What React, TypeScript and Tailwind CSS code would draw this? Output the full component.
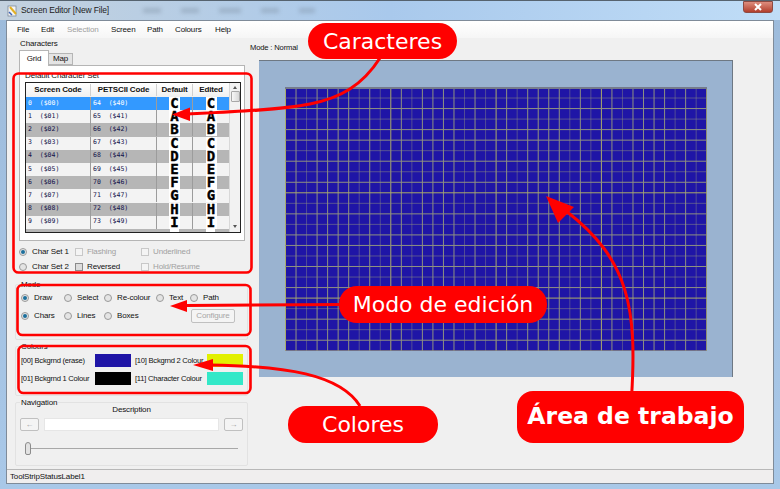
import React from 'react';

const menus = [
  { label: 'File', w: 'w-[24px]', off: false },
  { label: 'Edit', w: 'w-[26px]', off: false },
  { label: 'Selection', w: 'w-[44px]', off: true },
  { label: 'Screen', w: 'w-[36px]', off: false },
  { label: 'Path', w: 'w-[28px]', off: false },
  { label: 'Colours', w: 'w-[40px]', off: false },
  { label: 'Help', w: 'w-[24px]', off: false },
];

const rows = [
  ['0  ($00)', '64  ($40)', 'C'],
  ['1  ($01)', '65  ($41)', 'A'],
  ['2  ($02)', '66  ($42)', 'B'],
  ['3  ($03)', '67  ($43)', 'C'],
  ['4  ($04)', '68  ($44)', 'D'],
  ['5  ($05)', '69  ($45)', 'E'],
  ['6  ($06)', '70  ($46)', 'F'],
  ['7  ($07)', '71  ($47)', 'G'],
  ['8  ($08)', '72  ($48)', 'H'],
  ['9  ($09)', '73  ($49)', 'I'],
];

const Radio = ({ checked = false }: { checked?: boolean }) => (
  <span className="flex h-[8px] w-[8px] shrink-0 items-center justify-center rounded-full border border-[#9a9a9a] bg-[#e4e4e4]">
    {checked && <span className="h-[4px] w-[4px] rounded-full bg-[#1c6f9c]" />}
  </span>
);

const Check = ({ enabled = false }: { enabled?: boolean }) => (
  <span className={`h-[8px] w-[8px] shrink-0 border ${enabled ? 'border-[#8a8a8a] bg-[#dcdcdc]' : 'border-[#c8c8c8] bg-[#f4f4f4]'}`} />
);

const ModeItem = ({ label, w, checked = false }: { label: string; w: string; checked?: boolean }) => (
  <div className={`flex items-center gap-[5px] ${w}`}>
    <Radio checked={checked} />
    <span>{label}</span>
  </div>
);

const Group = ({ title, className, children }: { title: string; className: string; children: React.ReactNode }) => (
  <div className={`relative rounded-[2px] border border-[#e2e2e2] ${className}`}>
    <span className="absolute left-[4px] top-[-5px] bg-[#f0f0f0] px-px leading-[10px]">{title}</span>
    {children}
  </div>
);

const GridDrawing = () => {
  const step = 10.53;
  const cols = Array.from({ length: 41 }, (_, i) => i);
  const lines = Array.from({ length: 26 }, (_, i) => i);
  return (
    <svg width="422" height="264" className="block bg-[#1f15a6]">
      {cols.map((i) => (
        <line
          key={`c${i}`}
          x1={i * step + 0.5}
          x2={i * step + 0.5}
          y1="0"
          y2="264"
          stroke={i % 10 === 0 ? '#acac68' : '#8f9180'}
          strokeOpacity={i % 10 !== 0 && (i % 5 === 2 || i % 10 === 9) ? 0.45 : 1}
        />
      ))}
      {lines.map((i) => (
        <line
          key={`r${i}`}
          x1="0"
          x2="422"
          y1={i * step + 0.5}
          y2={i * step + 0.5}
          stroke={i % 10 === 0 ? '#acac68' : '#8f9180'}
          strokeOpacity={i % 10 !== 0 && (i % 5 === 1 || i % 5 === 3) ? 0.5 : 1}
        />
      ))}
      <rect x="0" y="0" width="422" height="2" fill="#757b8c" />
    </svg>
  );
};

const Annotations = () => (
  <svg width="780" height="489" className="pointer-events-none absolute left-0 top-0">
    <g fill="none" stroke="#ff0000">
      <rect x="13.5" y="73.5" width="238" height="199" rx="5" strokeWidth="2.6" />
      <rect x="17.5" y="285" width="233" height="50" rx="5" strokeWidth="2.6" />
      <rect x="18.5" y="346" width="232" height="47" rx="5" strokeWidth="2.6" />
      <path d="M380 58 C362 86 340 98 310 104 C280 110 230 112 188 114" strokeWidth="3" />
      <path d="M345 304.5 L185 305.5" strokeWidth="3" />
      <path d="M360 406 C340 374 285 366 210 365" strokeWidth="3" />
      <path d="M631.5 398 C637 310 630 260 566 211" strokeWidth="3" />
    </g>
    <g fill="#ff0000">
      <polygon points="172,114.5 190,107.5 190,121" />
      <polygon points="170,306 187,300 187,312" />
      <polygon points="193,365 213,359 213,371" />
      <polygon points="546,196 574,207 558,223" />
    </g>
  </svg>
);

export default function App() {
  return (
    <div className="relative flex h-[489px] w-[780px] flex-col overflow-hidden bg-gradient-to-b from-[#9dbbdb] to-[#a9c8e8] font-['Liberation_Sans',sans-serif] text-[8px] tracking-[-0.15px] text-[#111]">
      {/* title bar */}
      <div className="flex h-[20px] shrink-0 items-center border-t border-[#56636f] bg-gradient-to-r from-[#c3d1de] via-[#a9c9ec] to-[#c0ddf7] pl-[7px]">
        <svg width="11" height="12" viewBox="0 0 11 12" className="shrink-0">
          <rect x="1" y="1" width="8" height="10" fill="#f4f4f4" stroke="#7d8a99" strokeWidth="0.8" />
          <path d="M3 2 L9 9" stroke="#e2b021" strokeWidth="2" />
          <path d="M2 7 L5 10" stroke="#3d63b8" strokeWidth="1.5" />
        </svg>
        <span className="ml-[3px] text-[8.5px] text-[#222]">Screen Editor [New File]</span>
        <div className="ml-[34px] flex gap-[20px] opacity-40 blur-[2px]">
          <span className="h-[5px] w-[18px] bg-[#7a8c9e]" />
          <span className="h-[5px] w-[18px] bg-[#7a8c9e]" />
          <span className="h-[5px] w-[22px] bg-[#7a8c9e]" />
          <span className="h-[5px] w-[18px] bg-[#7a8c9e]" />
          <span className="h-[5px] w-[16px] bg-[#7a8c9e]" />
        </div>
        <div className="ml-auto mr-[7px] -mt-[7px] flex h-[12px] w-[30px] items-center justify-center rounded-b-[3px] border border-[#8e4a42] bg-gradient-to-b from-[#dd8d7e] to-[#b23d2c]">
          <svg width="10" height="8" viewBox="0 0 10 8">
            <path d="M2 1 L8 7 M8 1 L2 7" stroke="#fff" strokeWidth="2" />
          </svg>
        </div>
      </div>

      {/* client area */}
      <div className="mx-[6px] mb-[5px] flex flex-1 flex-col border border-[#7f8b99] bg-[#f0f0f0]">
        <div className="flex h-[17px] shrink-0 items-center bg-gradient-to-b from-white to-[#f6f6f6] pl-[10px]">
          {menus.map((m) => (
            <span key={m.label} className={`${m.w} ${m.off ? 'text-[#a0a0a0]' : ''}`}>
              {m.label}
            </span>
          ))}
        </div>

        <div className="flex min-h-0 flex-1">
          {/* left column */}
          <div className="flex w-[242px] shrink-0 flex-col pl-[8px]">
            <div className="h-[14px] pl-[5px] pt-[1px] leading-[10px]">Characters</div>
            <div className="flex h-[13px] items-end pl-[4px]">
              <div className="z-10 -mb-px flex h-[16px] w-[30px] items-center justify-center border border-b-0 border-[#b5b5b5] bg-white">Grid</div>
              <div className="flex h-[12px] w-[24px] items-center justify-center border border-l-0 border-[#b5b5b5] bg-[#e4e4e4]">Map</div>
            </div>

            <div className="relative ml-[4px] h-[176px] w-[226px] border border-[#b5b5b5] bg-white pl-[5px] pt-[16px]">
              <span className="absolute left-[5px] top-[5px] leading-[10px]">Default Character Set</span>
              <div className="flex h-[151px] w-[216px] overflow-hidden border border-[#222]">
                <div className="w-[203px] shrink-0">
                  <div className="grid h-[14px] grid-cols-[64px_66px_36px_37px] items-center bg-gradient-to-b from-white to-[#f0f0f0] text-center font-bold">
                    <span>Screen Code</span>
                    <span className="border-l border-[#d0d0d0]">PETSCII Code</span>
                    <span className="border-l border-[#d0d0d0]">Default</span>
                    <span className="border-l border-[#d0d0d0]">Edited</span>
                  </div>
                  {rows.map((r, i) => (
                    <div
                      key={r[0]}
                      className={`grid h-[13.2px] grid-cols-[64px_66px_36px_37px] items-center whitespace-pre font-['DejaVu_Sans_Mono',monospace] text-[6.5px] tracking-normal ${
                        i === 0 ? 'bg-[#3399ff] text-white' : i % 2 === 0 ? 'bg-[#b6b6b6] text-[#12124a]' : 'bg-[#f3f3f3] text-[#12124a]'
                      }`}
                    >
                      <span className="pl-[2px]">{r[0]}</span>
                      <span className="flex h-[13px] items-center border-l border-[#9c9c9c] pl-[2px]">{r[1]}</span>
                      {[0, 1].map((k) => (
                        <span key={k} className="flex h-[13px] justify-center border-l border-[#9c9c9c]">
                          <span className="flex h-[13px] w-[11px] items-center justify-center bg-white text-[14px] font-bold leading-[13px] text-black [-webkit-text-stroke:0.4px_black]">{r[2]}</span>
                        </span>
                      ))}
                    </div>
                  ))}
                  <div className="grid h-[3px] grid-cols-[64px_66px_36px_37px] bg-[#b6b6b6]">
                    <span />
                    <span />
                    <span className="mx-auto h-[3px] w-[9px] bg-white" />
                    <span className="mx-auto h-[3px] w-[9px] bg-white" />
                  </div>
                </div>
                <div className="flex flex-1 flex-col items-center border-l border-[#d8d8d8] bg-[#f2f2f2]">
                  <span className="mt-[3px] h-0 w-0 border-x-[2.5px] border-b-[3px] border-x-transparent border-b-[#555]" />
                  <span className="mt-[2px] h-[11px] w-[9px] rounded-[1px] border border-[#a8a8a8] bg-gradient-to-r from-[#f8f8f8] to-[#d8d8d8]" />
                  <span className="mb-[4px] mt-auto h-0 w-0 border-x-[2.5px] border-t-[3px] border-x-transparent border-t-[#555]" />
                </div>
              </div>
            </div>

            <div className="mt-[3px] grid grid-cols-[56px_66px_auto] pl-[4px] [grid-auto-rows:15px]">
              <div className="flex items-center gap-[5px]"><Radio checked /><span>Char Set 1</span></div>
              <div className="flex items-center gap-[4px] text-[#a0a0a0]"><Check /><span>Flashing</span></div>
              <div className="flex items-center gap-[4px] text-[#a0a0a0]"><Check /><span>Underlined</span></div>
              <div className="flex items-center gap-[5px]"><Radio /><span>Char Set 2</span></div>
              <div className="flex items-center gap-[4px]"><Check enabled /><span>Reversed</span></div>
              <div className="flex items-center gap-[4px] text-[#a0a0a0]"><Check /><span>Hold/Resume</span></div>
            </div>

            <Group title="Mode" className="mt-[10px] h-[56px] w-[233px] pl-[5px] pt-[6px]">
              <div className="flex h-[14px]">
                <ModeItem label="Draw" w="w-[43px]" checked />
                <ModeItem label="Select" w="w-[40px]" />
                <ModeItem label="Re-colour" w="w-[52px]" />
                <ModeItem label="Text" w="w-[34px]" />
                <ModeItem label="Path" w="w-[30px]" />
              </div>
              <div className="mt-[4px] flex h-[14px]">
                <ModeItem label="Chars" w="w-[43px]" checked />
                <ModeItem label="Lines" w="w-[40px]" />
                <ModeItem label="Boxes" w="w-[87px]" />
                <button className="h-[14px] w-[44px] rounded-[2px] border border-[#c0c0c0] bg-[#f4f4f4] text-[8px] text-[#a6a6a6]">Configure</button>
              </div>
            </Group>

            <Group title="Colours" className="mt-[6px] h-[50px] w-[233px] pl-[5px] pt-[7px]">
              <div className="flex h-[13px] items-center whitespace-nowrap text-[7.6px] tracking-[-0.25px]">
                <span className="w-[74px]">[00] Bckgrnd (erase)</span>
                <span className="h-[13px] w-[36px] bg-[#1f15a6]" />
                <span className="ml-[4px] w-[72px]">[10] Bckgrnd 2 Colour</span>
                <span className="h-[13px] w-[36px] bg-[#e2f000]" />
              </div>
              <div className="mt-[5px] flex h-[13px] items-center whitespace-nowrap text-[7.6px] tracking-[-0.25px]">
                <span className="w-[74px]">[01] Bckgrnd 1 Colour</span>
                <span className="h-[13px] w-[36px] bg-black" />
                <span className="ml-[4px] w-[72px]">[11] Character Colour</span>
                <span className="h-[13px] w-[36px] bg-[#33e8c8]" />
              </div>
            </Group>

            <Group title="Navigation" className="mt-[6px] h-[64px] w-[233px] px-[4px] pt-[2px]">
              <div className="text-center leading-[10px]">Description</div>
              <div className="mt-[3px] flex h-[13px] gap-[5px]">
                <button className="w-[19px] rounded-[2px] border border-[#c0c0c0] bg-[#f4f4f4] text-[8px] leading-none text-[#a0a0a0]">←</button>
                <div className="flex-1 border border-[#e6e6e6] bg-white" />
                <button className="w-[19px] rounded-[2px] border border-[#c0c0c0] bg-[#f4f4f4] text-[8px] leading-none text-[#a0a0a0]">→</button>
              </div>
              <div className="ml-[5px] mr-[5px] mt-[11px] flex h-[13px] items-center">
                <span className="h-[13px] w-[6px] shrink-0 rounded-b-[2px] rounded-t-[3px] border border-[#8c8c8c] bg-[#e2e2e2]" />
                <span className="h-px flex-1 bg-[#a8a8a8]" />
              </div>
            </Group>
          </div>

          {/* work area */}
          <div className="flex flex-1 flex-col pl-[10px]">
            <div className="-ml-[9px] h-[22px] pt-[5px] text-[7.6px] leading-[10px]">Mode : Normal</div>
            <div className="flex h-[317px] w-[474px] items-center justify-center border-r border-t border-[#6e7883] bg-[#9ab3d0]">
              <GridDrawing />
            </div>
          </div>
        </div>

        <div className="flex h-[14px] shrink-0 items-center border-t border-[#b8b8b8] bg-[#f0eeee] pl-[3px]">ToolStripStatusLabel1</div>
      </div>

      {/* callouts drawn over the screenshot */}
      <Annotations />
      <div className="absolute left-[308px] top-[23px] flex h-[36px] w-[149px] items-center justify-center rounded-[18px] bg-[#ff0000] font-['DejaVu_Sans',sans-serif] text-[22px] tracking-normal text-white">Caracteres</div>
      <div className="absolute left-[339px] top-[286px] flex h-[37px] w-[208px] items-center justify-center rounded-[18px] bg-[#ff0000] font-['DejaVu_Sans',sans-serif] text-[22px] tracking-normal text-white">Modo de edición</div>
      <div className="absolute left-[288px] top-[406px] flex h-[37px] w-[150px] items-center justify-center rounded-[18px] bg-[#ff0000] font-['DejaVu_Sans',sans-serif] text-[22px] tracking-normal text-white">Colores</div>
      <div className="absolute left-[517px] top-[391px] flex h-[52px] w-[227px] items-center justify-center rounded-[16px] bg-[#ff0000] font-['DejaVu_Sans',sans-serif] text-[23.5px] font-bold tracking-normal text-white">Área de trabajo</div>
    </div>
  );
}
